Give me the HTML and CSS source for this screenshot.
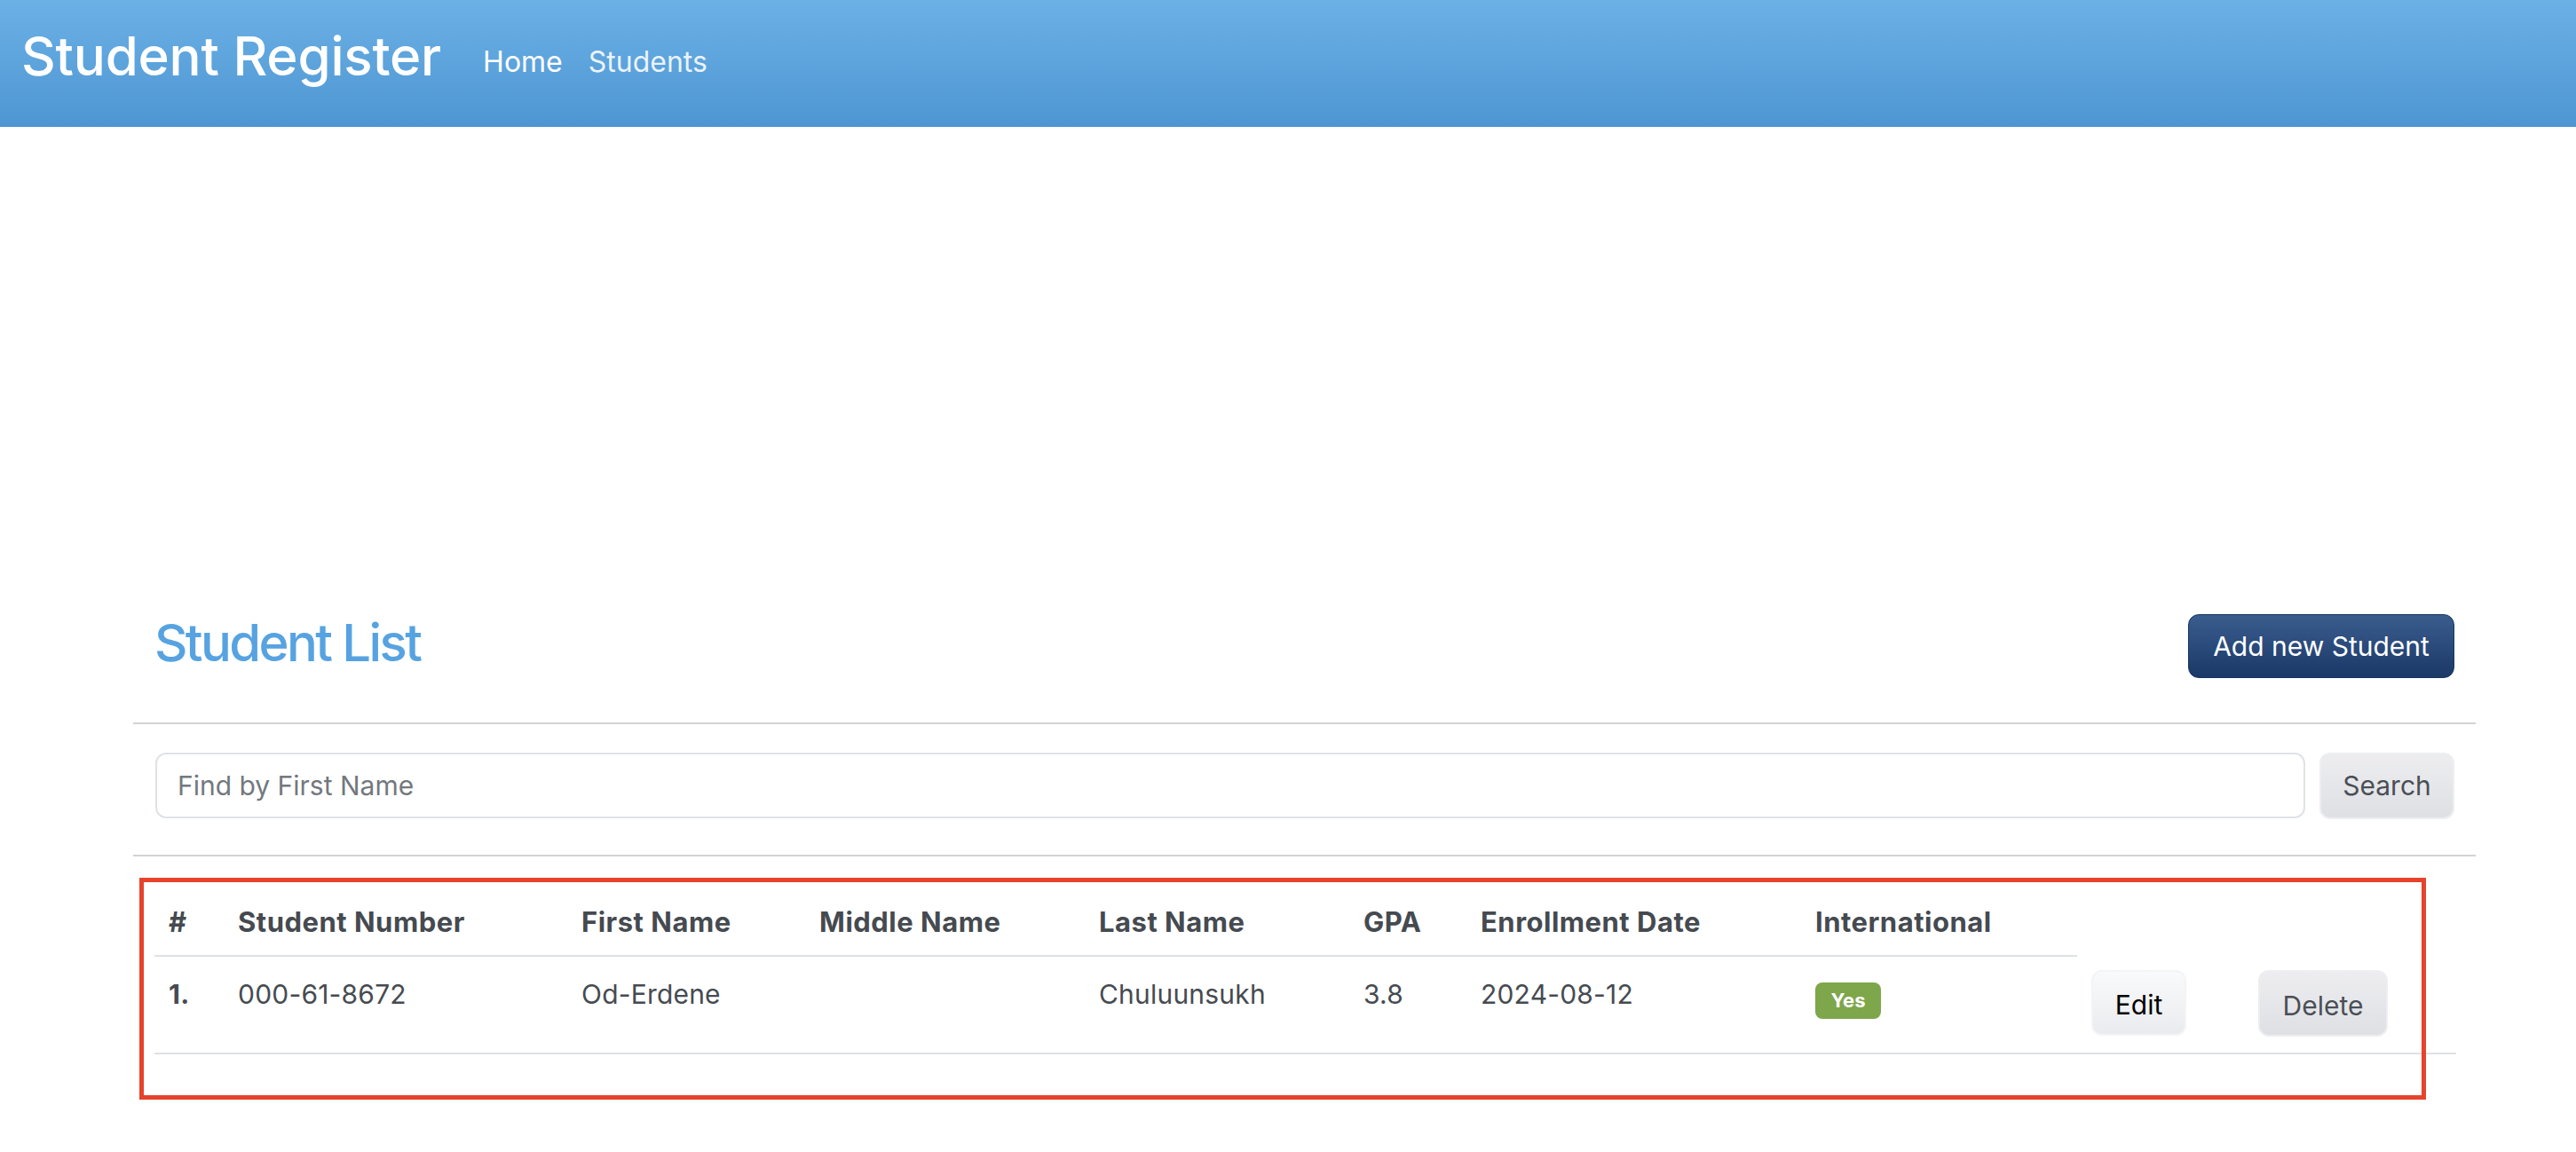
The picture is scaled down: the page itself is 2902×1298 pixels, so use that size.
FILE: index.html
```html
<!DOCTYPE html>
<html lang="en">
<head>
<meta charset="utf-8">
<title>Student Register</title>
<link rel="stylesheet" href="styles.css">
</head>
<body>
<nav class="navbar">
  <a class="brand" href="#">Student Register</a>
  <div class="nav-links">
    <a class="nav-link active" href="#">Home</a>
    <a class="nav-link" href="#">Students</a>
  </div>
</nav>

<main class="container">
  <div class="list-header">
    <h2 class="title">Student List</h2>
    <button class="btn btn-primary">Add new Student</button>
  </div>
  <hr class="divider">
  <div class="search-row">
    <input class="search-input" type="text" placeholder="Find by First Name">
    <button class="btn btn-light btn-search">Search</button>
  </div>
  <hr class="divider">

  <table class="student-table">
    <colgroup>
      <col class="c-idx"><col class="c-num"><col class="c-first"><col class="c-middle"><col class="c-last">
      <col class="c-gpa"><col class="c-date"><col class="c-intl"><col class="c-edit"><col class="c-del">
    </colgroup>
    <thead>
      <tr>
        <th>#</th>
        <th>Student Number</th>
        <th>First Name</th>
        <th>Middle Name</th>
        <th>Last Name</th>
        <th>GPA</th>
        <th>Enrollment Date</th>
        <th>International</th>
        <th class="empty"></th>
        <th class="empty"></th>
      </tr>
    </thead>
    <tbody>
      <tr>
        <td class="idx">1.</td>
        <td>000-61-8672</td>
        <td>Od-Erdene</td>
        <td></td>
        <td>Chuluunsukh</td>
        <td>3.8</td>
        <td>2024-08-12</td>
        <td class="badge-cell"><span class="badge">Yes</span></td>
        <td class="action"><button class="btn btn-white btn-edit">Edit</button></td>
        <td class="action"><button class="btn btn-light btn-delete">Delete</button></td>
      </tr>
    </tbody>
  </table>
</main>

<div class="highlight"></div>
</body>
</html>
```

FILE: styles.css
```css
* { box-sizing: border-box; }

body {
  margin: 0;
  font-family: Inter, "Noto Sans", "Liberation Sans", sans-serif;
  color: #464b51;
  background: #fff;
  position: relative;
  min-height: 1298px;
}

.navbar {
  height: 143px;
  background: linear-gradient(#6cb1e6, #4e96d3);
  display: flex;
  align-items: flex-start;
  padding: 27px 0 0 24px;
}

.brand {
  color: #fff;
  text-decoration: none;
  font-size: 60px;
  line-height: 72px;
  font-weight: 500;
  letter-spacing: -0.2px;
  margin-right: 47px;
}

.nav-links {
  display: flex;
  gap: 29px;
  margin-top: 20px;
}

.nav-link {
  color: rgba(255, 255, 255, 0.88);
  text-decoration: none;
  font-size: 32px;
  line-height: 45px;
}

.nav-link.active { color: #fff; }

.container {
  margin: 549px 0 0 150px;
  width: 2639px;
}

.list-header {
  display: flex;
  align-items: center;
  justify-content: space-between;
  padding: 0 24px;
  height: 72px;
}

.title {
  margin: 0;
  padding-bottom: 8px;
  font-size: 58px;
  line-height: 71px;
  font-weight: 500;
  color: #57a3e1;
  letter-spacing: -2.6px;
}

.btn {
  font-family: inherit;
  font-size: 30px;
  line-height: 45px;
  border-radius: 12px;
  cursor: pointer;
  padding: 0;
}

.btn-primary {
  width: 300px;
  height: 72px;
  color: #fff;
  background: linear-gradient(#3a5d8d, #1a3868);
  border: 1px solid #17335f;
}

.btn-light {
  color: #4a4f55;
  background: linear-gradient(#ededf0, #dfe0e4);
  border: 2px solid #eceef1;
}

.btn-white {
  color: #000;
  background: linear-gradient(#f9fafb, #eaebee);
  border: 2px solid #f3f4f6;
}

.divider {
  margin: 0;
  border: 0;
  border-top: 2px solid #d3d3d5;
}

.list-header + .divider { margin-top: 50px; }

.search-row {
  display: flex;
  gap: 16px;
  padding: 32px 24px 40px 25px;
}

.search-input {
  width: 2422px;
  height: 74px;
  border: 2px solid #dfe3e7;
  border-radius: 12px;
  padding: 0 23px;
  font-family: inherit;
  font-size: 30px;
  color: #464b51;
  outline: none;
}

.search-input::placeholder { color: #73787e; }

.btn-search {
  width: 152px;
  height: 75px;
}

.student-table {
  margin: 36px 0 0 24px;
  width: 2593px;
  table-layout: fixed;
  border-collapse: collapse;
  font-size: 30px;
  line-height: 45px;
}

.c-idx { width: 78px; }
.c-num { width: 387px; }
.c-first { width: 268px; }
.c-middle { width: 315px; }
.c-last { width: 298px; }
.c-gpa { width: 132px; }
.c-date { width: 377px; }
.c-intl { width: 311px; }
.c-edit { width: 188px; }
.c-del { width: 239px; }

.student-table th {
  text-align: left;
  vertical-align: bottom;
  font-weight: 700;
  font-size: 31px;
  letter-spacing: 0.5px;
  padding: 15px 16px;
  border-bottom: 2px solid #dee2e6;
  color: #454a50;
  white-space: nowrap;
}

.student-table th.empty { border-bottom: 0; }

.student-table td {
  vertical-align: top;
  padding: 20px 16px 0;
  border-bottom: 2px solid #dee2e6;
  white-space: nowrap;
  letter-spacing: 0.2px;
}

.student-table td.idx { font-weight: 700; }

.student-table td.action { padding: 16px 16px 18px; }

.student-table td.badge-cell { padding-top: 24px; }

.badge {
  display: inline-block;
  width: 74px;
  height: 41px;
  line-height: 41px;
  text-align: center;
  border-radius: 8px;
  background: #7ea64b;
  color: #fff;
  font-size: 22px;
  font-weight: 700;
  letter-spacing: 0;
}

.btn-edit { width: 107px; height: 74px; padding-top: 5px; }
.btn-delete { width: 146px; height: 75px; padding-top: 5px; }

.highlight {
  position: absolute;
  left: 157px;
  top: 989px;
  width: 2576px;
  height: 250px;
  border: 5px solid #e6432c;
  pointer-events: none;
}
```
